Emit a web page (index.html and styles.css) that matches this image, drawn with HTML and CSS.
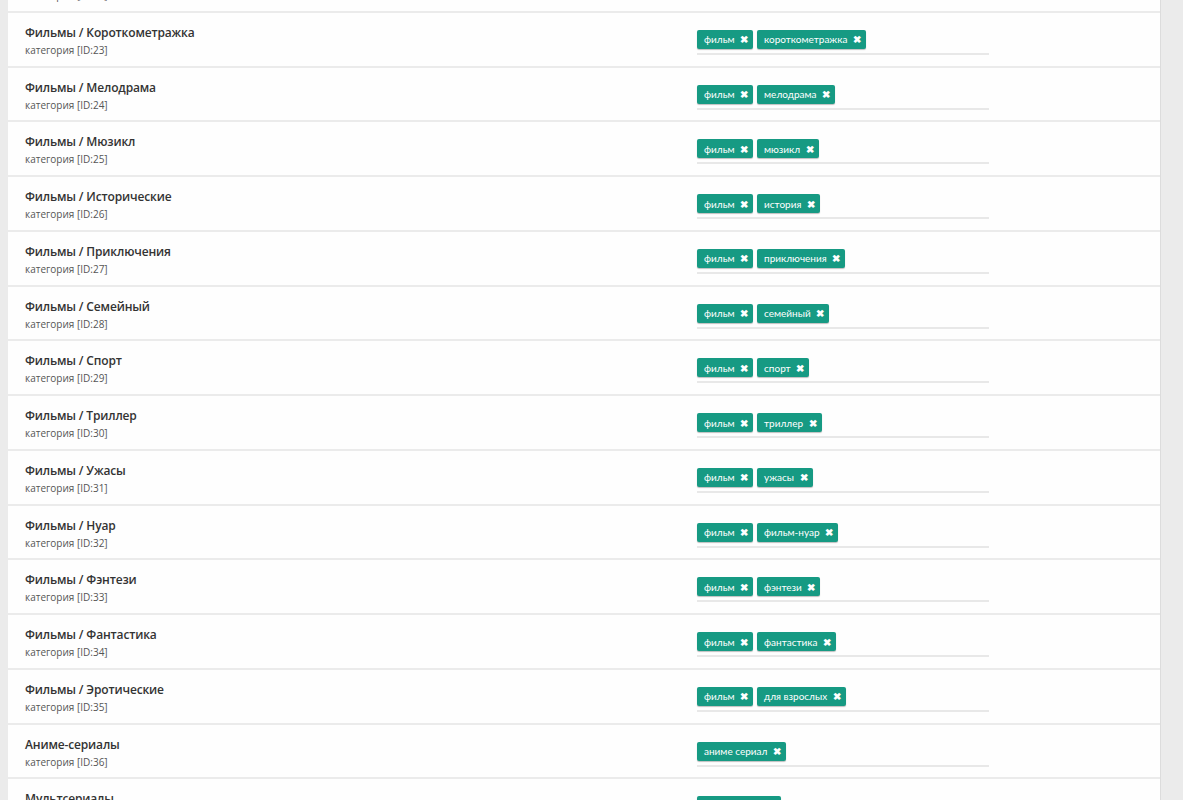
FILE: index.html
```html
<!DOCTYPE html>
<html lang="ru">
<head>
    <meta charset="UTF-8">
    <title>Категории</title>
    <link rel="stylesheet" href="styles.css">
</head>
<body>
    <div class="page">
        <div class="panel">
            <ul class="cat-list">
                <li class="cat-row">
                    <div class="cat-info">
                        <div class="cat-name">Фильмы / Комедия</div>
                        <div class="cat-meta">категория [ID:22]</div>
                    </div>
                    <div class="cat-tags">
                        <span class="tag">фильм <i class="tag-x">✖</i></span>
                        <span class="tag">комедия <i class="tag-x">✖</i></span>
                    </div>
                </li>
                <li class="cat-row">
                    <div class="cat-info">
                        <div class="cat-name">Фильмы / Короткометражка</div>
                        <div class="cat-meta">категория [ID:23]</div>
                    </div>
                    <div class="cat-tags">
                        <span class="tag">фильм <i class="tag-x">✖</i></span>
                        <span class="tag">короткометражка <i class="tag-x">✖</i></span>
                    </div>
                </li>
                <li class="cat-row">
                    <div class="cat-info">
                        <div class="cat-name">Фильмы / Мелодрама</div>
                        <div class="cat-meta">категория [ID:24]</div>
                    </div>
                    <div class="cat-tags">
                        <span class="tag">фильм <i class="tag-x">✖</i></span>
                        <span class="tag">мелодрама <i class="tag-x">✖</i></span>
                    </div>
                </li>
                <li class="cat-row">
                    <div class="cat-info">
                        <div class="cat-name">Фильмы / Мюзикл</div>
                        <div class="cat-meta">категория [ID:25]</div>
                    </div>
                    <div class="cat-tags">
                        <span class="tag">фильм <i class="tag-x">✖</i></span>
                        <span class="tag">мюзикл <i class="tag-x">✖</i></span>
                    </div>
                </li>
                <li class="cat-row">
                    <div class="cat-info">
                        <div class="cat-name">Фильмы / Исторические</div>
                        <div class="cat-meta">категория [ID:26]</div>
                    </div>
                    <div class="cat-tags">
                        <span class="tag">фильм <i class="tag-x">✖</i></span>
                        <span class="tag">история <i class="tag-x">✖</i></span>
                    </div>
                </li>
                <li class="cat-row">
                    <div class="cat-info">
                        <div class="cat-name">Фильмы / Приключения</div>
                        <div class="cat-meta">категория [ID:27]</div>
                    </div>
                    <div class="cat-tags">
                        <span class="tag">фильм <i class="tag-x">✖</i></span>
                        <span class="tag">приключения <i class="tag-x">✖</i></span>
                    </div>
                </li>
                <li class="cat-row">
                    <div class="cat-info">
                        <div class="cat-name">Фильмы / Семейный</div>
                        <div class="cat-meta">категория [ID:28]</div>
                    </div>
                    <div class="cat-tags">
                        <span class="tag">фильм <i class="tag-x">✖</i></span>
                        <span class="tag">семейный <i class="tag-x">✖</i></span>
                    </div>
                </li>
                <li class="cat-row">
                    <div class="cat-info">
                        <div class="cat-name">Фильмы / Спорт</div>
                        <div class="cat-meta">категория [ID:29]</div>
                    </div>
                    <div class="cat-tags">
                        <span class="tag">фильм <i class="tag-x">✖</i></span>
                        <span class="tag">спорт <i class="tag-x">✖</i></span>
                    </div>
                </li>
                <li class="cat-row">
                    <div class="cat-info">
                        <div class="cat-name">Фильмы / Триллер</div>
                        <div class="cat-meta">категория [ID:30]</div>
                    </div>
                    <div class="cat-tags">
                        <span class="tag">фильм <i class="tag-x">✖</i></span>
                        <span class="tag">триллер <i class="tag-x">✖</i></span>
                    </div>
                </li>
                <li class="cat-row">
                    <div class="cat-info">
                        <div class="cat-name">Фильмы / Ужасы</div>
                        <div class="cat-meta">категория [ID:31]</div>
                    </div>
                    <div class="cat-tags">
                        <span class="tag">фильм <i class="tag-x">✖</i></span>
                        <span class="tag">ужасы <i class="tag-x">✖</i></span>
                    </div>
                </li>
                <li class="cat-row">
                    <div class="cat-info">
                        <div class="cat-name">Фильмы / Нуар</div>
                        <div class="cat-meta">категория [ID:32]</div>
                    </div>
                    <div class="cat-tags">
                        <span class="tag">фильм <i class="tag-x">✖</i></span>
                        <span class="tag">фильм-нуар <i class="tag-x">✖</i></span>
                    </div>
                </li>
                <li class="cat-row">
                    <div class="cat-info">
                        <div class="cat-name">Фильмы / Фэнтези</div>
                        <div class="cat-meta">категория [ID:33]</div>
                    </div>
                    <div class="cat-tags">
                        <span class="tag">фильм <i class="tag-x">✖</i></span>
                        <span class="tag">фэнтези <i class="tag-x">✖</i></span>
                    </div>
                </li>
                <li class="cat-row">
                    <div class="cat-info">
                        <div class="cat-name">Фильмы / Фантастика</div>
                        <div class="cat-meta">категория [ID:34]</div>
                    </div>
                    <div class="cat-tags">
                        <span class="tag">фильм <i class="tag-x">✖</i></span>
                        <span class="tag">фантастика <i class="tag-x">✖</i></span>
                    </div>
                </li>
                <li class="cat-row">
                    <div class="cat-info">
                        <div class="cat-name">Фильмы / Эротические</div>
                        <div class="cat-meta">категория [ID:35]</div>
                    </div>
                    <div class="cat-tags">
                        <span class="tag">фильм <i class="tag-x">✖</i></span>
                        <span class="tag">для взрослых <i class="tag-x">✖</i></span>
                    </div>
                </li>
                <li class="cat-row">
                    <div class="cat-info">
                        <div class="cat-name">Аниме-сериалы</div>
                        <div class="cat-meta">категория [ID:36]</div>
                    </div>
                    <div class="cat-tags">
                        <span class="tag">аниме сериал <i class="tag-x">✖</i></span>
                    </div>
                </li>
                <li class="cat-row">
                    <div class="cat-info">
                        <div class="cat-name">Мультсериалы</div>
                        <div class="cat-meta">категория [ID:37]</div>
                    </div>
                    <div class="cat-tags">
                        <span class="tag">мультсериал <i class="tag-x">✖</i></span>
                    </div>
                </li>
            </ul>
        </div>
    </div>
</body>
</html>
```

FILE: styles.css
```css
* {
    margin: 0;
    padding: 0;
    box-sizing: border-box;
}

body {
    font-family: "Open Sans", Arial, sans-serif;
    background-color: #ebebeb;
    color: #333;
    overflow: hidden;
}

.page {
    padding-left: 8px;
    width: 1161px;
}

.panel {
    background-color: #fefefe;
    border-right: 1px solid #dcdcdc;
    min-height: 100vh;
}

.cat-list {
    list-style: none;
    margin-top: -42px; /* list is scrolled, first row cut off */
}

.cat-row {
    display: grid;
    grid-template-columns: 672px 292px;
    height: 54.77px;
    padding: 10px 0 0 17px;
    border-bottom: 2px solid #ebebeb;
}

.cat-name {
    font-size: 12px;
    font-weight: 600;
    letter-spacing: -0.15px;
    line-height: 19px;
    color: #333;
}

.cat-meta {
    font-size: 10px;
    line-height: 16px;
    color: #555;
}

.cat-tags {
    display: flex;
    gap: 4px;
    align-items: flex-start;
    height: 25px;
    margin-top: 7px;
    border-bottom: 2px solid #e8e8e8;
}

.tag {
    display: inline-flex;
    align-items: center;
    height: 19px;
    padding: 0 5px 0 7px;
    background-color: #169a83;
    color: #fff;
    font-family: Lato, "Open Sans", sans-serif;
    font-size: 10px;
    border-radius: 2px;
    box-shadow: 0 1px 1px rgba(0, 0, 0, 0.25);
    white-space: pre;
}

.tag-x {
    font-style: normal;
    font-size: 10px;
    font-weight: bold;
    margin-left: 3px;
}
```
